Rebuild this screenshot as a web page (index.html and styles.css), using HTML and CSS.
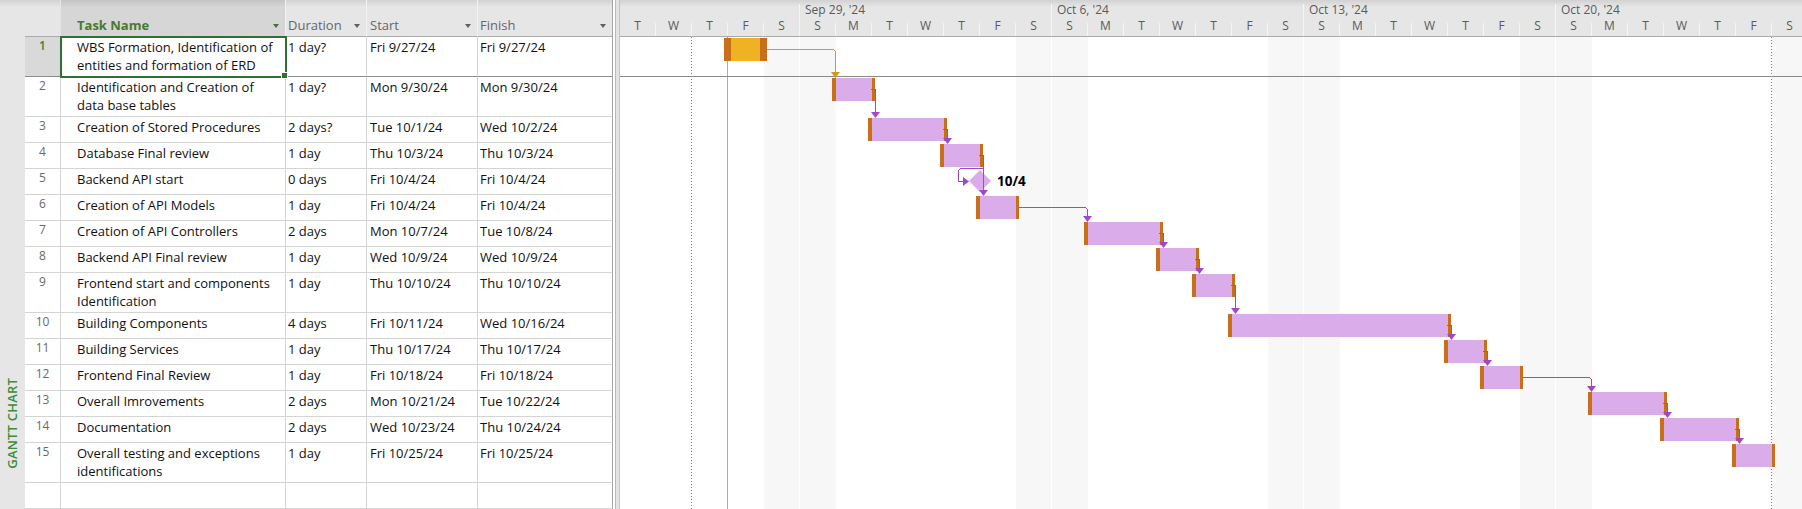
FILE: index.html
```html
<!DOCTYPE html>
<html>
<head>
<meta charset="utf-8">
<title>Gantt Chart</title>
<link rel="stylesheet" href="styles.css">
</head>
<body>
<div class="app">
  <div class="sidebar"><span class="side-label">GANTT CHART</span></div>

  <div class="grid">
    <div class="row head">
      <div class="c num"></div>
      <div class="c name"><span class="hname">Task Name</span><i class="dd dd-green"></i></div>
      <div class="c dur"><span>Duration</span><i class="dd"></i></div>
      <div class="c start"><span>Start</span><i class="dd"></i></div>
      <div class="c fin"><span>Finish</span><i class="dd"></i></div>
    </div>
    <div class="row tall selrow">
      <div class="c num">1</div>
      <div class="c name selcell">WBS Formation, Identification of<br>entities and formation of ERD</div>
      <div class="c dur">1 day?</div>
      <div class="c start">Fri 9/27/24</div>
      <div class="c fin">Fri 9/27/24</div>
    </div>
    <div class="row tall">
      <div class="c num">2</div>
      <div class="c name">Identification and Creation of<br>data base tables</div>
      <div class="c dur">1 day?</div>
      <div class="c start">Mon 9/30/24</div>
      <div class="c fin">Mon 9/30/24</div>
    </div>
    <div class="row">
      <div class="c num">3</div>
      <div class="c name">Creation of Stored Procedures</div>
      <div class="c dur">2 days?</div>
      <div class="c start">Tue 10/1/24</div>
      <div class="c fin">Wed 10/2/24</div>
    </div>
    <div class="row">
      <div class="c num">4</div>
      <div class="c name">Database Final review</div>
      <div class="c dur">1 day</div>
      <div class="c start">Thu 10/3/24</div>
      <div class="c fin">Thu 10/3/24</div>
    </div>
    <div class="row">
      <div class="c num">5</div>
      <div class="c name">Backend API start</div>
      <div class="c dur">0 days</div>
      <div class="c start">Fri 10/4/24</div>
      <div class="c fin">Fri 10/4/24</div>
    </div>
    <div class="row">
      <div class="c num">6</div>
      <div class="c name">Creation of API Models</div>
      <div class="c dur">1 day</div>
      <div class="c start">Fri 10/4/24</div>
      <div class="c fin">Fri 10/4/24</div>
    </div>
    <div class="row">
      <div class="c num">7</div>
      <div class="c name">Creation of API Controllers</div>
      <div class="c dur">2 days</div>
      <div class="c start">Mon 10/7/24</div>
      <div class="c fin">Tue 10/8/24</div>
    </div>
    <div class="row">
      <div class="c num">8</div>
      <div class="c name">Backend API Final review</div>
      <div class="c dur">1 day</div>
      <div class="c start">Wed 10/9/24</div>
      <div class="c fin">Wed 10/9/24</div>
    </div>
    <div class="row tall">
      <div class="c num">9</div>
      <div class="c name">Frontend start and components<br>Identification</div>
      <div class="c dur">1 day</div>
      <div class="c start">Thu 10/10/24</div>
      <div class="c fin">Thu 10/10/24</div>
    </div>
    <div class="row">
      <div class="c num">10</div>
      <div class="c name">Building Components</div>
      <div class="c dur">4 days</div>
      <div class="c start">Fri 10/11/24</div>
      <div class="c fin">Wed 10/16/24</div>
    </div>
    <div class="row">
      <div class="c num">11</div>
      <div class="c name">Building Services</div>
      <div class="c dur">1 day</div>
      <div class="c start">Thu 10/17/24</div>
      <div class="c fin">Thu 10/17/24</div>
    </div>
    <div class="row">
      <div class="c num">12</div>
      <div class="c name">Frontend Final Review</div>
      <div class="c dur">1 day</div>
      <div class="c start">Fri 10/18/24</div>
      <div class="c fin">Fri 10/18/24</div>
    </div>
    <div class="row">
      <div class="c num">13</div>
      <div class="c name">Overall Imrovements</div>
      <div class="c dur">2 days</div>
      <div class="c start">Mon 10/21/24</div>
      <div class="c fin">Tue 10/22/24</div>
    </div>
    <div class="row">
      <div class="c num">14</div>
      <div class="c name">Documentation</div>
      <div class="c dur">2 days</div>
      <div class="c start">Wed 10/23/24</div>
      <div class="c fin">Thu 10/24/24</div>
    </div>
    <div class="row tall">
      <div class="c num">15</div>
      <div class="c name">Overall testing and exceptions<br>identifications</div>
      <div class="c dur">1 day</div>
      <div class="c start">Fri 10/25/24</div>
      <div class="c fin">Fri 10/25/24</div>
    </div>
    <div class="row">
      <div class="c num"></div>
      <div class="c name"></div>
      <div class="c dur"></div>
      <div class="c start"></div>
      <div class="c fin"></div>
    </div>
  </div>

  <div class="splitter"></div>

  <div class="chart">
    <div class="tl-head">
      <div class="weeks">
        <div class="wk first"></div>
        <div class="wk">Sep 29, '24</div>
        <div class="wk">Oct 6, '24</div>
        <div class="wk">Oct 13, '24</div>
        <div class="wk">Oct 20, '24</div>
      </div>
      <div class="days">
        <div class="d">T</div><div class="d">W</div><div class="d">T</div><div class="d">F</div><div class="d wkend">S</div>
        <div class="d">S</div><div class="d">M</div><div class="d">T</div><div class="d">W</div><div class="d">T</div><div class="d">F</div><div class="d wkend">S</div>
        <div class="d">S</div><div class="d">M</div><div class="d">T</div><div class="d">W</div><div class="d">T</div><div class="d">F</div><div class="d wkend">S</div>
        <div class="d">S</div><div class="d">M</div><div class="d">T</div><div class="d">W</div><div class="d">T</div><div class="d">F</div><div class="d wkend">S</div>
        <div class="d">S</div><div class="d">M</div><div class="d">T</div><div class="d">W</div><div class="d">T</div><div class="d">F</div><div class="d wkend">S</div>
      </div>
    </div>
    <div class="tl-body">
      <div class="cols">
        <div class="col"></div><div class="col"></div><div class="col"></div><div class="col"></div><div class="col we sat"></div>
        <div class="col we"></div><div class="col"></div><div class="col"></div><div class="col"></div><div class="col"></div><div class="col"></div><div class="col we sat"></div>
        <div class="col we"></div><div class="col"></div><div class="col"></div><div class="col"></div><div class="col"></div><div class="col"></div><div class="col we sat"></div>
        <div class="col we"></div><div class="col"></div><div class="col"></div><div class="col"></div><div class="col"></div><div class="col"></div><div class="col we sat"></div>
        <div class="col we"></div><div class="col"></div><div class="col"></div><div class="col"></div><div class="col"></div><div class="col"></div><div class="col we sat"></div>
      </div>
      <svg class="bars" viewBox="0 0 1182 472" width="1182" height="472" xmlns="http://www.w3.org/2000/svg" shape-rendering="crispEdges">
        <line class="dotted" x1="71.5" y1="0" x2="71.5" y2="472"/>
        <line class="dotted" x1="1151.5" y1="0" x2="1151.5" y2="472"/>
        <line class="status" x1="107.5" y1="0" x2="107.5" y2="472"/>
        <line class="selline" x1="0" y1="39.5" x2="1182" y2="39.5"/>

        <!-- row 1 (selected) -->
        <rect class="cap" x="104" y="1" width="7" height="23"/>
        <rect class="gold" x="111" y="1" width="29" height="23"/>
        <rect class="cap" x="140" y="1" width="7" height="23"/>
        <!-- row 2 -->
        <rect class="cap" x="212" y="41" width="4" height="23"/><rect class="fill" x="216" y="41" width="36" height="23"/><rect class="cap" x="252" y="41" width="3" height="23"/>
        <!-- row 3 -->
        <rect class="cap" x="248" y="81" width="4" height="23"/><rect class="fill" x="252" y="81" width="72" height="23"/><rect class="cap" x="324" y="81" width="3" height="23"/>
        <!-- row 4 -->
        <rect class="cap" x="320" y="107" width="4" height="23"/><rect class="fill" x="324" y="107" width="36" height="23"/><rect class="cap" x="360" y="107" width="3" height="23"/>
        <!-- row 5 milestone -->
        <polygon class="fill" points="360,133 371,144 360,155 349,144" shape-rendering="auto"/>
        <text class="ms-label" x="377" y="149">10/4</text>
        <!-- row 6 -->
        <rect class="cap" x="356" y="159" width="4" height="23"/><rect class="fill" x="360" y="159" width="36" height="23"/><rect class="cap" x="396" y="159" width="3" height="23"/>
        <!-- row 7 -->
        <rect class="cap" x="464" y="185" width="4" height="23"/><rect class="fill" x="468" y="185" width="72" height="23"/><rect class="cap" x="540" y="185" width="3" height="23"/>
        <!-- row 8 -->
        <rect class="cap" x="536" y="211" width="4" height="23"/><rect class="fill" x="540" y="211" width="36" height="23"/><rect class="cap" x="576" y="211" width="3" height="23"/>
        <!-- row 9 -->
        <rect class="cap" x="572" y="237" width="4" height="23"/><rect class="fill" x="576" y="237" width="36" height="23"/><rect class="cap" x="612" y="237" width="3" height="23"/>
        <!-- row 10 -->
        <rect class="cap" x="608" y="277" width="4" height="23"/><rect class="fill" x="612" y="277" width="216" height="23"/><rect class="cap" x="828" y="277" width="3" height="23"/>
        <!-- row 11 -->
        <rect class="cap" x="824" y="303" width="4" height="23"/><rect class="fill" x="828" y="303" width="36" height="23"/><rect class="cap" x="864" y="303" width="3" height="23"/>
        <!-- row 12 -->
        <rect class="cap" x="860" y="329" width="4" height="23"/><rect class="fill" x="864" y="329" width="36" height="23"/><rect class="cap" x="900" y="329" width="3" height="23"/>
        <!-- row 13 -->
        <rect class="cap" x="968" y="355" width="4" height="23"/><rect class="fill" x="972" y="355" width="72" height="23"/><rect class="cap" x="1044" y="355" width="3" height="23"/>
        <!-- row 14 -->
        <rect class="cap" x="1040" y="381" width="4" height="23"/><rect class="fill" x="1044" y="381" width="72" height="23"/><rect class="cap" x="1116" y="381" width="3" height="23"/>
        <!-- row 15 -->
        <rect class="cap" x="1112" y="407" width="4" height="23"/><rect class="fill" x="1116" y="407" width="36" height="23"/><rect class="cap" x="1152" y="407" width="3" height="23"/>

        <!-- links -->
        <path class="link gold-link" d="M147 12.5 H213.5 L215.5 14.5 V35"/>
        <polygon class="head-gold" points="211,35 220,35 215.5,41" shape-rendering="auto"/>

        <path class="link" d="M251 52.5 H255.5 V75"/>
        <polygon class="head" points="251,75 260,75 255.5,81" shape-rendering="auto"/>
        <path class="link" d="M323 92.5 H327.5 V101"/>
        <polygon class="head" points="323,101 332,101 327.5,107" shape-rendering="auto"/>
        <path class="link" d="M359 118.5 H363.5 V131.5 H340.5 L338.5 133.5 V144.5 H343"/>
        <polygon class="head" points="343,140 343,149 349,144.5" shape-rendering="auto"/>
        <path class="link" d="M363.5 131.5 V153"/>
        <polygon class="head" points="359,153 368,153 363.5,159" shape-rendering="auto"/>
        <path class="link" d="M399 170.5 H465.5 L467.5 172.5 V179"/>
        <polygon class="head" points="463,179 472,179 467.5,185" shape-rendering="auto"/>
        <path class="link" d="M539 196.5 H543.5 V205"/>
        <polygon class="head" points="539,205 548,205 543.5,211" shape-rendering="auto"/>
        <path class="link" d="M575 222.5 H579.5 V231"/>
        <polygon class="head" points="575,231 584,231 579.5,237" shape-rendering="auto"/>
        <path class="link" d="M611 248.5 H615.5 V271"/>
        <polygon class="head" points="611,271 620,271 615.5,277" shape-rendering="auto"/>
        <path class="link" d="M827 288.5 H831.5 V297"/>
        <polygon class="head" points="827,297 836,297 831.5,303" shape-rendering="auto"/>
        <path class="link" d="M863 314.5 H867.5 V323"/>
        <polygon class="head" points="863,323 872,323 867.5,329" shape-rendering="auto"/>
        <path class="link" d="M903 340.5 H969.5 L971.5 342.5 V349"/>
        <polygon class="head" points="967,349 976,349 971.5,355" shape-rendering="auto"/>
        <path class="link" d="M1043 366.5 H1047.5 V375"/>
        <polygon class="head" points="1043,375 1052,375 1047.5,381" shape-rendering="auto"/>
        <path class="link" d="M1115 392.5 H1119.5 V401"/>
        <polygon class="head" points="1115,401 1124,401 1119.5,407" shape-rendering="auto"/>
      </svg>
    </div>
  </div>
</div>
</body>
</html>
```

FILE: styles.css
```css
html, body {
  margin: 0;
  padding: 0;
  background: #ffffff;
  overflow: hidden;
}

body {
  font-family: "Open Sans", "Noto Sans", sans-serif;
  color: #111111;
}

.app {
  display: flex;
  width: 1802px;
  height: 509px;
  overflow: hidden;
}

/* ---------- left vertical view bar ---------- */
.sidebar {
  flex: none;
  width: 25px;
  height: 509px;
  box-sizing: border-box;
  background: #e6e6e6 linear-gradient(to bottom, #d2d2d2, #e6e6e6 7px) no-repeat;
  display: flex;
  flex-direction: column;
  justify-content: flex-end;
  align-items: center;
  padding-bottom: 40px;
}

.side-label {
  writing-mode: vertical-rl;
  transform: rotate(180deg);
  font-size: 13px;
  font-weight: 600;
  line-height: 23px;
  color: #3f8b3a;
  letter-spacing: 0.2px;
}

/* ---------- task table ---------- */
.grid {
  flex: none;
  width: 588px;
}

.row {
  display: flex;
  height: 26px;
}

.row.tall {
  height: 40px;
}

.row.head {
  height: 37px;
}

.c {
  box-sizing: border-box;
  height: 100%;
  border-right: 1px solid #d4d4d4;
  border-bottom: 1px solid #d4d4d4;
  font-size: 13px;
  line-height: 18px;
  padding-top: 1px;
  white-space: nowrap;
  overflow: hidden;
  color: #111111;
}

.num {
  width: 36px;
  text-align: center;
  font-size: 12px;
  color: #6a6a6a;
  padding-top: 0;
}

.name {
  width: 225px;
  padding-left: 16px;
}

.dur {
  width: 81px;
  padding-left: 2px;
}

.start {
  width: 111px;
  padding-left: 3px;
}

.fin {
  width: 135px;
  padding-left: 2px;
  border-right-color: #a3a3a3;
}

/* header */
.head .c {
  display: flex;
  align-items: flex-start;
  padding-top: 16px;
  background: #e6e6e6 linear-gradient(to bottom, #d2d2d2, #e6e6e6 7px) no-repeat;
  border-bottom-color: #ababab;
  border-right-color: #f2f2f2;
  color: #666666;
  overflow: visible;
}

.head .num {
  border-right-color: #e6e6e6;
}

.head .name {
  background: #d6d6d6 linear-gradient(to bottom, #c4c4c4, #d6d6d6 7px) no-repeat;
}

.head .fin {
  border-right-color: #a3a3a3;
}

.hname {
  font-weight: bold;
  color: #467a2d;
}

.dd {
  flex: none;
  margin-left: auto;
  margin-right: 6px;
  margin-top: 8px;
  width: 0;
  height: 0;
  border-left: 3.5px solid transparent;
  border-right: 3.5px solid transparent;
  border-top: 4px solid #606060;
}

.dd-green {
  border-top-color: #4d6b45;
}

/* selected row */
.selrow .c {
  border-bottom-color: #8c8c8c;
}

.selrow .num {
  background: #d9d9d9;
  color: #4c7c2e;
  font-weight: 600;
}

.selcell {
  position: relative;
  overflow: visible;
  outline: 2px solid #2f6f33;
  outline-offset: -1px;
}

.selcell::after {
  content: "";
  position: absolute;
  right: -3px;
  bottom: -3px;
  width: 5px;
  height: 5px;
  background: #2f6f33;
  border: 1px solid #ffffff;
  box-sizing: content-box;
}

/* ---------- splitter ---------- */
.splitter {
  flex: none;
  width: 5px;
  margin-left: 2px;
  box-sizing: border-box;
  background: #e3e3e3;
  border-left: 1px solid #b9b9b9;
  border-right: 1px solid #c4c4c4;
}

/* ---------- timeline ---------- */
.chart {
  flex: none;
  width: 1182px;
  overflow: hidden;
}

.tl-head {
  height: 37px;
  box-sizing: border-box;
  border-bottom: 1px solid #ababab;
  background: #e6e6e6 linear-gradient(to bottom, #d2d2d2, #e6e6e6 7px) no-repeat;
  color: #5a5a5a;
  font-size: 12px;
}

.weeks {
  display: flex;
  height: 18px;
}

.wk {
  flex: none;
  width: 252px;
  box-sizing: border-box;
  padding-left: 6px;
  line-height: 19px;
  white-space: nowrap;
  background: linear-gradient(#f6f6f6, #f6f6f6) no-repeat left bottom / 1px 14px;
}

.wk.first {
  width: 179px;
  background: none;
}

.days {
  display: flex;
  height: 18px;
}

.d {
  flex: none;
  width: 36px;
  box-sizing: border-box;
  padding-right: 1px;
  text-align: center;
  line-height: 15px;
  background: linear-gradient(#f6f6f6, #f6f6f6) no-repeat right bottom / 1px 13px;
}

.d.wkend {
  background-size: 1px 18px;
}

.tl-body {
  position: relative;
  height: 472px;
}

.cols {
  display: flex;
  height: 100%;
}

.col {
  flex: none;
  width: 36px;
  height: 100%;
  box-sizing: border-box;
}

.col.we {
  background: #f7f7f7;
}

.col.sat {
  border-right: 1px solid #ffffff;
}

.bars {
  position: absolute;
  left: 0;
  top: 0;
  display: block;
}

.bars .dotted {
  stroke: #7d7d7d;
  stroke-width: 1;
  stroke-dasharray: 1 2;
}

.bars .status {
  stroke: #8cc28a;
  stroke-width: 1;
}

.bars .selline {
  stroke: #8a8a8a;
  stroke-width: 1;
}

.bars .cap {
  fill: #c96f19;
}

.bars .fill {
  fill: #daadea;
}

.bars .gold {
  fill: #efb222;
}

.bars .link {
  fill: none;
  stroke: #a446c9;
  stroke-width: 1;
}

.bars .gold-link {
  stroke: #d39a1e;
}

.bars .head {
  fill: #a446c9;
}

.bars .head-gold {
  fill: #d39a1e;
}

.bars .ms-label {
  font-family: "Open Sans", "Noto Sans", sans-serif;
  font-size: 13.5px;
  font-weight: bold;
  fill: #000000;
}
```
